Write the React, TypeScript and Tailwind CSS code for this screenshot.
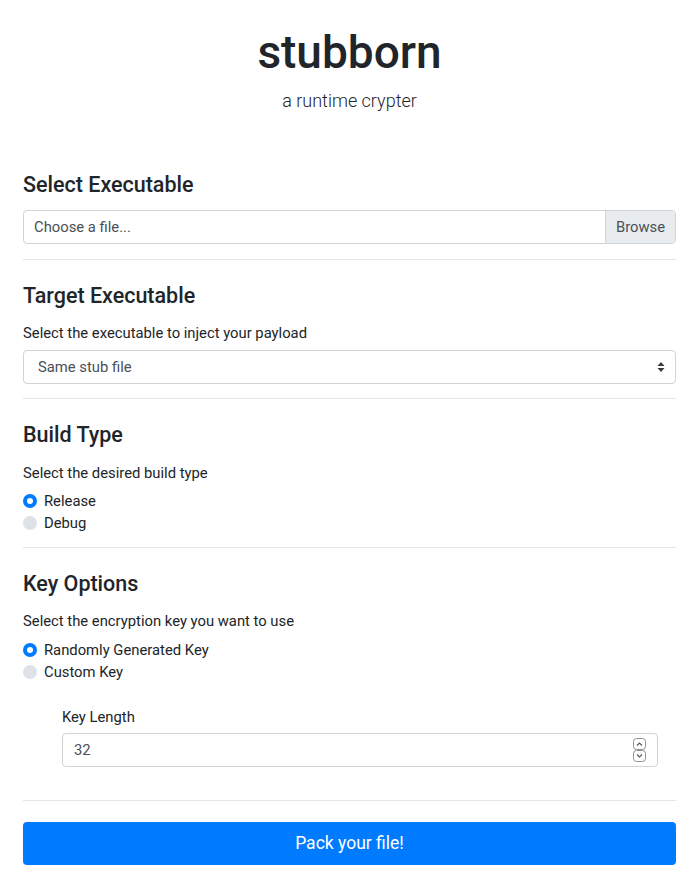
const font = { fontFamily: 'Roboto, "Noto Sans", sans-serif' };

function Radio({ label, checked }: { label: string; checked?: boolean }) {
  return (
    <label className="flex h-[22px] items-center text-[14.8px] text-[#212529]">
      {checked ? (
        <span className="flex h-[14px] w-[14px] items-center justify-center rounded-full bg-[#007bff]">
          <span className="h-[6px] w-[6px] rounded-full bg-white" />
        </span>
      ) : (
        <span className="h-[14px] w-[14px] rounded-full bg-[#dee2e6]" />
      )}
      <span className="ml-[7px]">{label}</span>
    </label>
  );
}

function Divider({ className }: { className: string }) {
  return <div className={`h-px bg-[#e5e5e5] ${className}`} />;
}

export default function App() {
  return (
    <div className="min-h-screen bg-white pl-[23px] pr-[22px] text-[#212529]" style={font}>
      <div className="pt-[25px] text-center">
        <h1 className="text-[46px] font-medium leading-[55px]">stubborn</h1>
        <p className="mt-[7px] text-[18px] font-light leading-[27px]">a runtime crypter</p>
      </div>

      <h4 className="mt-[58px] text-[21.5px] font-medium leading-[25px]">Select Executable</h4>
      <div className="mt-[13px] flex h-[34px] rounded-[4px] border border-[#ced4da] text-[14.8px] text-[#495057]">
        <div className="flex flex-1 items-center px-[10px]">Choose a file...</div>
        <div className="flex w-[70px] items-center justify-center rounded-r-[3px] border-l border-[#ced4da] bg-[#e9ecef]">Browse</div>
      </div>
      <Divider className="mt-[15px]" />

      <h4 className="mt-[23px] text-[21.5px] font-medium leading-[25px]">Target Executable</h4>
      <p className="mt-[15px] text-[14.8px] leading-[21px]">Select the executable to inject your payload</p>
      <div className="mt-[6px] flex h-[34px] items-center justify-between rounded-[4px] border border-[#ced4da] pl-[14px] pr-[10px] text-[14.8px] text-[#495057]">
        <span>Same stub file</span>
        <svg width="8" height="12" viewBox="0 0 8 12">
          <path d="M4 1 L7.5 5 H0.5 Z" fill="#343a40" />
          <path d="M4 11 L7.5 7 H0.5 Z" fill="#343a40" />
        </svg>
      </div>
      <Divider className="mt-[14px]" />

      <h4 className="mt-[23px] text-[21.5px] font-medium leading-[25px]">Build Type</h4>
      <p className="mt-[16px] text-[14.8px] leading-[21px]">Select the desired build type</p>
      <div className="mt-[6px]">
        <Radio label="Release" checked />
        <Radio label="Debug" />
      </div>
      <Divider className="mt-[13px]" />

      <h4 className="mt-[23px] text-[21.5px] font-medium leading-[25px]">Key Options</h4>
      <p className="mt-[15px] text-[14.8px] leading-[21px]">Select the encryption key you want to use</p>
      <div className="mt-[7px]">
        <Radio label="Randomly Generated Key" checked />
        <Radio label="Custom Key" />
      </div>

      <div className="ml-[39px] mr-[18px]">
        <p className="mt-[24px] text-[14.8px] leading-[21px]">Key Length</p>
        <div className="mt-[5px] flex h-[34px] items-center justify-between rounded-[4px] border border-[#ced4da] pl-[11px] pr-[11px] text-[14.8px] text-[#495057]">
          <span>32</span>
          <svg width="13" height="24" viewBox="0 0 13 24">
            <rect x="0.5" y="0.5" width="12" height="11" rx="3" fill="white" stroke="#8f8f8f" />
            <rect x="0.5" y="12.5" width="12" height="11" rx="3" fill="white" stroke="#8f8f8f" />
            <path d="M4 7.5 L6.5 5 L9 7.5" fill="none" stroke="#555" strokeWidth="1.1" />
            <path d="M4 16.5 L6.5 19 L9 16.5" fill="none" stroke="#555" strokeWidth="1.1" />
          </svg>
        </div>
      </div>
      <Divider className="mt-[33px]" />

      <button className="mt-[21px] flex h-[43px] w-full items-center justify-center rounded-[4px] bg-[#007bff] text-[17.5px] text-white">
        Pack your file!
      </button>
    </div>
  );
}
